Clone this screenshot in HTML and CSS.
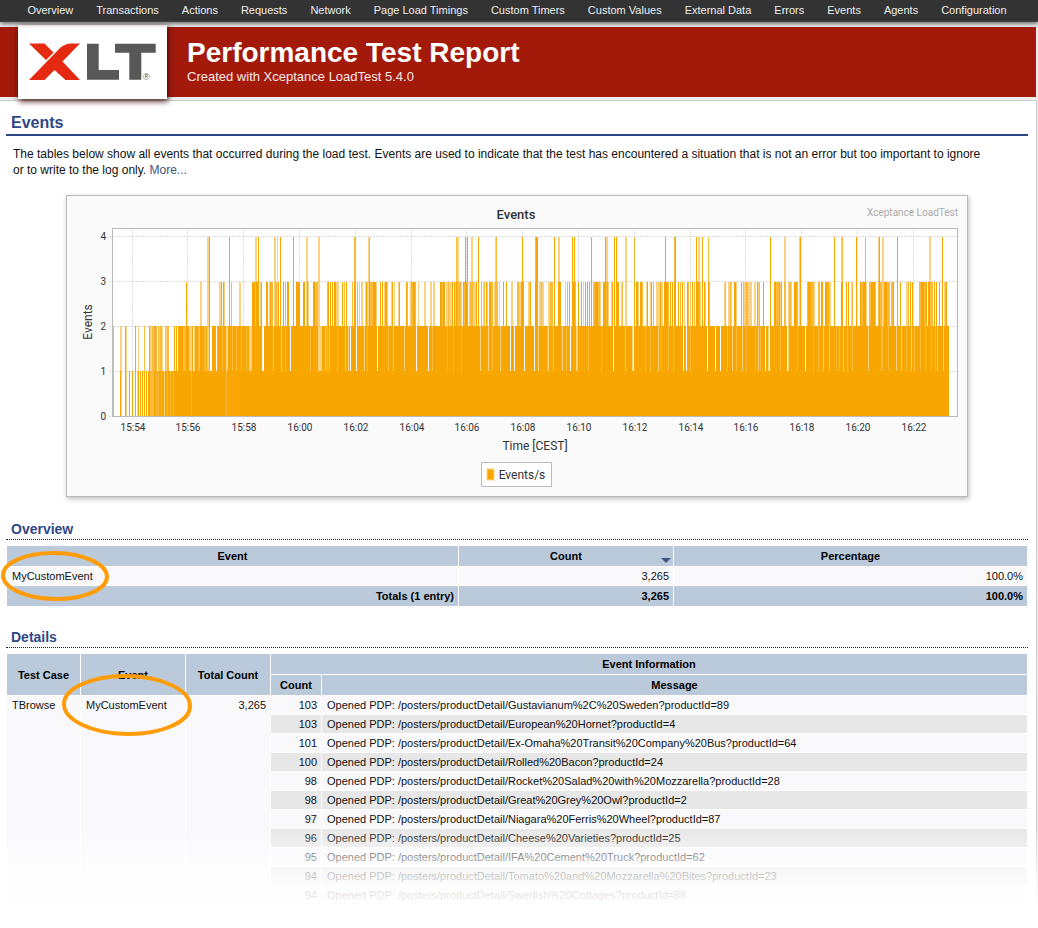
FILE: index.html
```html
<!DOCTYPE html>
<html lang="en">
<head>
<meta charset="utf-8">
<title>Performance Test Report - Events</title>
<link rel="stylesheet" href="styles.css">
</head>
<body>
<nav class="nav">
  <a href="#">Overview</a><a href="#">Transactions</a><a href="#">Actions</a><a href="#">Requests</a><a href="#">Network</a><a href="#">Page Load Timings</a><a href="#">Custom Timers</a><a href="#">Custom Values</a><a href="#">External Data</a><a href="#">Errors</a><a href="#">Events</a><a href="#">Agents</a><a href="#">Configuration</a>
</nav>
<div class="page">
  <header class="header">
    <div class="logo">
      <svg viewBox="18 25 149 74" width="149" height="74" role="img" aria-label="XLT">
        <path fill="#e62a12" d="M80 43.5H71Q65 43.5 60 48L29 80H44.500L54.500 70 65.500 80H80L62.500 61.500ZM29 43.500H44.500L53.500 52.500 46 60Z"/>
        <path fill="#585858" d="M87 43.700H98.700V70H119V79.700H87ZM115 43.700H155.700V52.700H141.300V79.700H129.300V52.700H115Z"/>
        <text x="143" y="80" class="logo-mark">®</text>
      </svg>
    </div>
    <div class="titles">
      <h1>Performance Test Report</h1>
      <p>Created with Xceptance LoadTest 5.4.0</p>
    </div>
  </header>
  <main class="content">
    <h2>Events</h2>
    <p class="intro">The tables below show all events that occurred during the load test. Events are used to indicate that the test has encountered a situation that is not an error but too important to ignore or to write to the log only. <a href="#">More...</a></p>
    <svg class="chart" viewBox="66 195 902 302" role="img" aria-label="Events per second">
      <rect x="112.500" y="228.500" width="845" height="188" fill="#fff"/>
      <g id="grid" class="grid"></g>
      <g id="bars" fill="#f8a602" shape-rendering="crispEdges"></g>
      <rect x="112.500" y="228.500" width="845" height="188" fill="none" stroke="#bbb"/>
      <g id="ticks" class="tick"></g>
      <text x="516" y="219" class="chart-title">Events</text>
      <text x="958" y="216" class="chart-brand">Xceptance LoadTest</text>
      <text x="535" y="450" class="axis">Time [CEST]</text>
      <text transform="translate(92 322) rotate(-90)" class="axis">Events</text>
      <rect x="481.500" y="462.500" width="70" height="24" fill="#fff" stroke="#bbb"/>
      <rect x="487" y="469" width="7" height="11" fill="#f8a602" stroke="#fcd68a" stroke-width="1"/>
      <text x="522" y="479" class="axis">Events/s</text>
    </svg>

    <h3>Overview</h3>
    <table class="overview">
      <colgroup><col class="o-event"><col class="o-count"><col></colgroup>
      <thead><tr><th>Event</th><th class="sorted">Count</th><th>Percentage</th></tr></thead>
      <tbody><tr><td class="marked">MyCustomEvent<svg class="ring ring-small" width="110" height="52" viewBox="0 0 110 52"><ellipse cx="55" cy="26" rx="52" ry="23" transform="rotate(1 55 26)"/></svg></td><td class="num">3,265</td><td class="num">100.0%</td></tr></tbody>
      <tfoot><tr><th class="num">Totals (1 entry)</th><th class="num">3,265</th><th class="num">100.0%</th></tr></tfoot>
    </table>

    <h3>Details</h3>
    <table class="details">
      <colgroup><col class="d-case"><col class="d-event"><col class="d-total"><col class="d-count"><col></colgroup>
      <thead>
        <tr><th rowspan="2">Test Case</th><th rowspan="2">Event</th><th rowspan="2">Total Count</th><th colspan="2">Event Information</th></tr>
        <tr><th>Count</th><th>Message</th></tr>
      </thead>
      <tbody>
        <tr><td rowspan="11" class="top">TBrowse</td><td rowspan="11" class="top marked">MyCustomEvent<svg class="ring ring-large" width="132" height="64" viewBox="0 0 132 64"><ellipse cx="66" cy="32" rx="63" ry="29" transform="rotate(1 66 32)"/></svg></td><td rowspan="11" class="top num">3,265</td><td class="num">103</td><td>Opened PDP: /posters/productDetail/Gustavianum%2C%20Sweden?productId=89</td></tr>
        <tr class="even"><td class="num">103</td><td>Opened PDP: /posters/productDetail/European%20Hornet?productId=4</td></tr>
        <tr><td class="num">101</td><td>Opened PDP: /posters/productDetail/Ex-Omaha%20Transit%20Company%20Bus?productId=64</td></tr>
        <tr class="even"><td class="num">100</td><td>Opened PDP: /posters/productDetail/Rolled%20Bacon?productId=24</td></tr>
        <tr><td class="num">98</td><td>Opened PDP: /posters/productDetail/Rocket%20Salad%20with%20Mozzarella?productId=28</td></tr>
        <tr class="even"><td class="num">98</td><td>Opened PDP: /posters/productDetail/Great%20Grey%20Owl?productId=2</td></tr>
        <tr><td class="num">97</td><td>Opened PDP: /posters/productDetail/Niagara%20Ferris%20Wheel?productId=87</td></tr>
        <tr class="even"><td class="num">96</td><td>Opened PDP: /posters/productDetail/Cheese%20Varieties?productId=25</td></tr>
        <tr><td class="num">95</td><td>Opened PDP: /posters/productDetail/IFA%20Cement%20Truck?productId=62</td></tr>
        <tr class="even"><td class="num">94</td><td>Opened PDP: /posters/productDetail/Tomato%20and%20Mozzarella%20Bites?productId=23</td></tr>
        <tr><td class="num">94</td><td>Opened PDP: /posters/productDetail/Swedish%20Cottages?productId=88</td></tr>
      </tbody>
    </table>
  </main>
</div>
<div class="fade"></div>
<script src="chart.js"></script>
</body>
</html>
```
FILE: styles.css
```css
* { box-sizing: border-box; }

body {
  margin: 0;
  position: relative;
  min-height: 100vh;
  background: #ececec;
  color: #111;
  font-family: "Liberation Sans", Arial, sans-serif;
  font-size: 12px;
  overflow-x: hidden;
}

h1, h2, h3, p { margin: 0; }

.nav {
  position: relative;
  z-index: 2;
  display: flex;
  justify-content: center;
  gap: 23px;
  height: 22px;
  padding-right: 4px;
  background: #333;
  border-bottom: 1px solid #444;
  box-shadow: 0 1px 5px #444;
}
.nav a {
  color: #eee;
  font-size: 11px;
  line-height: 21px;
  text-decoration: none;
  white-space: nowrap;
}

.page { padding: 5px 2px 0 0; }

.header {
  display: flex;
  height: 70px;
  padding-left: 18px;
  background: #a31a0b;
  color: #fff;
}
.logo {
  height: 74px;
  margin-top: -2px;
  background: #fff;
  box-shadow: 1px 2px 6px #3b0a05;
}
.logo svg { display: block; }
.logo-mark { font-size: 9px; fill: #585858; }
.titles { padding: 10px 20px; }
.titles h1 { font-size: 28px; line-height: 32px; }
.titles p { font-size: 13px; line-height: 16px; color: #f5eaea; }

.content {
  margin-top: 3px;
  padding: 12px 8px 22px 6px;
  background: #fff;
  border-top: 1px solid #ccc;
  border-right: 1px solid #ccc;
  margin-right: -1px;
}

h2 {
  padding: 0 0 2px 5px;
  border-bottom: 2px solid #2d4580;
  color: #2f4785;
  font-size: 16px;
  line-height: 19px;
}
h3 {
  margin-bottom: 5px;
  padding-left: 5px;
  border-bottom: 1px dotted #222;
  color: #2f4785;
  font-size: 14px;
  line-height: 20px;
}

.intro { padding: 10px 40px 17px 7px; line-height: 16px; }
.intro a { color: #3e557d; text-decoration: none; }

.chart {
  display: block;
  width: 902px;
  max-width: 100%;
  margin: 0 auto 22px;
  background: #fafafa;
  outline: 1px solid #bbb;
  outline-offset: -1px;
  box-shadow: 1px 2px 5px #bbb;
  font-family: Roboto, sans-serif;
  fill: #333;
}
.grid { stroke: #ddd; stroke-dasharray: 2 1; fill: none; }
.tick { font-size: 10px; text-anchor: middle; }
.tick .y { text-anchor: end; }
.axis { font-size: 12px; text-anchor: middle; }
.chart-title { font-size: 13px; font-weight: 500; text-anchor: middle; }
.chart-brand { font-size: 10px; text-anchor: end; fill: #aaa; }

table {
  width: 100%;
  table-layout: fixed;
  border-collapse: separate;
  border-spacing: 1px;
  font-size: 11px;
  line-height: 12px;
}
th { padding: 4px 5px; background: #bbcadb; color: #000; }
td { padding: 3px 5px; background: #f9f9fc; }
.even td { background: #e7e7e7; }
.num { padding-right: 4px; text-align: right; }
.top { vertical-align: top; }
.overview { margin-bottom: 20px; }
.o-event { width: 451px; }
.o-count { width: 214px; }
.d-case { width: 73px; }
.d-event { width: 104px; }
.d-total { width: 84px; }
.d-count { width: 50px; }

.sorted { position: relative; }
.sorted::after {
  content: "";
  position: absolute;
  right: 2px;
  bottom: 3px;
  border: 5px solid transparent;
  border-top-color: #3e557d;
  border-bottom: 0;
}

.marked { position: relative; }
.ring {
  position: absolute;
  z-index: 1;
  fill: none;
  stroke: #ff9c08;
  stroke-width: 4;
  pointer-events: none;
}
.ring-small { left: -7px; top: -17px; }
.ring-large { left: -20px; top: -23px; }

.fade {
  position: absolute;
  z-index: 3;
  right: 0;
  bottom: 0;
  left: 0;
  height: 100px;
  background: linear-gradient(rgba(255, 255, 255, 0), rgba(255, 255, 255, 0.6) 32%, rgba(255, 255, 255, 0.8) 52%, rgba(255, 255, 255, 0.9) 70%, #fff 84%);
}
```
FILE: chart.js
```js
// Bars by level. Each entry is "x", "x-x2"; suffix p = pale, m = medium, w = empty.
var LEVELS = {
  4: "207-208p 209 229 255-256p 258 274-275p 277p 280 293 306-307p 318-319p 354-355m 368p 369m 456m 457-458p 465 467 471-472p 478 495p 496m 522 535m 536-537 554 558-559p 572 574 591 605 606-607p 614 616 625-626p 634m 665 674m 675 696 698-699p 702 708m 770 784-785p 799p 800 834 841p 842m 856 865m 878p 879 882-883p 897 929-930p 942",
  3: "186 200-201p 219-220p 221 223 224p 229 231m 239-240p 252-254 255m 256-257 258 260p 261 266-267 269p 270 271-272m 275-276m 277p 278 280 283 285m 287-288 293 296-299 303-304 306p 307 308p 313-314 315-317m 319p 327m 328 330 332 334-335 336-338p 342 344m 346 352m 354-355 357m 359p 361-362p 365p 366 367p 369 370-372m 373-375 376p 380 382 384p 385-386 387p 391p 392 394p 398p 399 406 407m 410p 411-412m 413-414 415m 418p 424-425p 430-431p 433-434p 440-441 442m 443-444 446-447p 448m 449-451p 452 454 455p 456 457-460m 461p 463 464m 465-467 469p 470-472m 473-475p 476 478 481m 483p 484m 486 487p 489-490 491-492m 494p 495-497m 499p 503 506 511-512p 517-518m 519-520p 521-523 528p 529p 530 535-537 539-540p 541m 542-543p 548-549p 550-552m 554 558-560 565p 567m 569 572-573 574-575m 578 581 583p 585 587 589 591 593-594m 595-597 598-599m 600p 603-605 606m 607 608p 611p 612 614 616-618 621p 622m 625p 634 636-637 638p 640-641 642m 646p 647 650p 651 653m 656-659p 660 661-662p 664-667 668m 670 672 674-675 678 680m 682 684p 687 688m 690p 692 694m 696-698 699m 700p 702 704 705p 708 709m 724p 725m 728-729p 730m 731p 734-735 736p 741 743m 744-745p 746-747m 748-751p 754-755p 757 758p 759m 763 770 774-775 776-778m 779 780p 781 784-785m 788p 789-790m 791p 794-796 797m 799p 800 807m 808-810 811-813m 814p 818-819m 821-822 825-826 827m 828 829-830p 834 841-842 846 848 851p 852m 856 860 861-862m 863-865 866p 869-870m 871-874 875m 878-881m 882-883p 884-886 887-889m 891-892m 893 897 900 906-907p 908m 910 912 919-920m 921-923 924-925m 926 928-929 930-932m 934 936 939 942 944p 945m 946",
  2: "113m 120-121p 125 126p 135 138p 144m 149 150-151p 152-154m 155 156m 158m 159p 160-161m 162p 165m 166p 167-168m 174 176 178-182 183-185m 186-948 189-190p 191p 193w 194p 198-199m 204-205m 207-208p 209w 210-211w 216w 222m 226-227p 232m 236m 241m 246m 249-250p 251p 262-263w 266m 273p 281p 285m 290w 310m 318-321p 325p 327m 329p 337m 345p 348p 350w 356w 364p 367m 373p 377w 382m 388m 393p 399m 404p 416w 428w 432m 440p 447m 453m 461m 476p 480p 488p 492m 500p 510w 514w 524w 534w 538p 547m 548p 553p 562p 566m 570w 576-577p 581m 588m 596m 601m 612-613w 618m 625p 632p 633w 645m 650m 658p 661m 668p 673m 683w 686w 690m 697m 707w 715w 720w 727m 732p 736m 742p 746m 755m 757-758p 760m 765w 768p 769w 780m 787w 788p 797m 805w 810m 813p 818p 823p 829p 836m 839m 843p 847m 852m 860p 868p 874m 881p 882m 888m 896p 901p 906m 911p 914m 920p 925m 931p 935m 937p 943p 946p",
  1: "113m 120 121p 125 129 132 135 137p 138 140 142 144 146 148 150-153m 154 155-156m 157-948 158p 161m 164p 167m 170m 173m 176m 180m 186m 191m 196p 201m 206m 215m 226m 234m"
};
var TOPS = { 4: 237, 3: 282, 2: 326, 1: 371 };
var BOTTOMS = { 4: 282, 3: 326, 2: 371, 1: 416 };
var ALPHA = { "": 1, m: 0.78, p: 0.5, w: 0 };
var NS = "http://www.w3.org/2000/svg";

function add(parent, name, attrs, text) {
  var el = document.createElementNS(NS, name);
  Object.keys(attrs).forEach(function (k) { el.setAttribute(k, attrs[k]); });
  if (text !== undefined) el.textContent = text;
  parent.appendChild(el);
}

// A bar that reaches a level also fills every level below it.
var bars = document.getElementById("bars");
var above = {};
[4, 3, 2, 1].forEach(function (level) {
  var columns = {};
  LEVELS[level].split(" ").forEach(function (item) {
    var m = /^(\d+)(?:-(\d+))?([pmw]?)$/.exec(item);
    for (var x = +m[1]; x <= +(m[2] || m[1]); x++) columns[x] = ALPHA[m[3]];
  });
  Object.keys(above).forEach(function (x) {
    columns[x] = Math.max(columns[x] || 0, above[x]);
  });
  [1, 0.78, 0.5].forEach(function (alpha) {
    var d = "";
    Object.keys(columns).forEach(function (x) {
      if (columns[x] === alpha) d += "M" + x + " " + TOPS[level] + "h1V" + BOTTOMS[level] + "h-1z";
    });
    add(bars, "path", { d: d, opacity: alpha });
  });
  above = columns;
});

var grid = document.getElementById("grid");
var ticks = document.getElementById("ticks");
[236, 281, 326, 371, 416].forEach(function (y, i) {
  add(grid, "path", { d: "M109 " + (y + 0.5) + "H957" });
  add(ticks, "text", { x: 106, y: y + 4, "class": "y" }, 4 - i);
});
["15:54", "15:56", "15:58", "16:00", "16:02", "16:04", "16:06", "16:08", "16:10", "16:12", "16:14", "16:16", "16:18", "16:20", "16:22"].forEach(function (label, i) {
  var x = Math.floor(132 + i * 55.8);
  add(grid, "path", { d: "M" + (x + 0.5) + " 229V419" });
  add(ticks, "text", { x: x + 1, y: 431 }, label);
});
```
